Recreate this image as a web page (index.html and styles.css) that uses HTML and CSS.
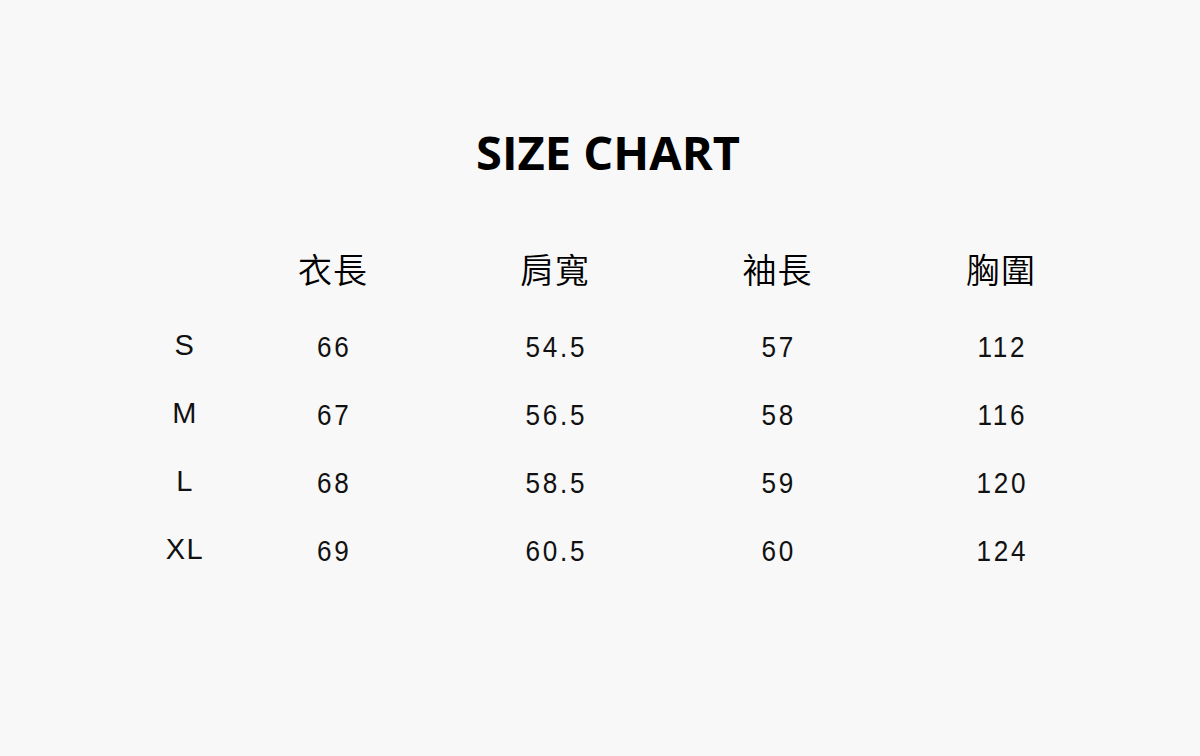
FILE: index.html
```html
<!DOCTYPE html>
<html lang="zh-Hant">
<head>
<meta charset="utf-8">
<title>Size Chart</title>
<link rel="stylesheet" href="styles.css">
</head>
<body>
<main class="page">
  <h1 class="title">SIZE CHART</h1>
  <div class="chart">
    <div class="row head">
      <div class="cell size"></div>
      <div class="cell">衣長</div>
      <div class="cell">肩寬</div>
      <div class="cell">袖長</div>
      <div class="cell">胸圍</div>
    </div>
    <div class="row">
      <div class="cell size">S</div>
      <div class="cell num">66</div>
      <div class="cell num">54.5</div>
      <div class="cell num">57</div>
      <div class="cell num">112</div>
    </div>
    <div class="row">
      <div class="cell size">M</div>
      <div class="cell num">67</div>
      <div class="cell num">56.5</div>
      <div class="cell num">58</div>
      <div class="cell num">116</div>
    </div>
    <div class="row">
      <div class="cell size">L</div>
      <div class="cell num">68</div>
      <div class="cell num">58.5</div>
      <div class="cell num">59</div>
      <div class="cell num">120</div>
    </div>
    <div class="row">
      <div class="cell size">XL</div>
      <div class="cell num">69</div>
      <div class="cell num">60.5</div>
      <div class="cell num">60</div>
      <div class="cell num">124</div>
    </div>
  </div>
</main>
</body>
</html>
```

FILE: styles.css
```css
html, body {
  margin: 0;
  padding: 0;
}
body {
  background: #f8f8f8;
  color: #000;
  width: 1200px;
  height: 756px;
  overflow: hidden;
}
.page {
  padding-top: 124px;
}
.title {
  margin: 0;
  padding-left: 16px;
  font-family: "Open Sans", "Liberation Sans", sans-serif;
  font-weight: 700;
  font-size: 47px;
  line-height: 56px;
  text-align: center;
  letter-spacing: 0;
}
.chart {
  margin-top: 47px;
  margin-left: 146px;
}
.row {
  display: grid;
  grid-template-columns: 76px 222px 222px 223px 224px;
  height: 68px;
  align-items: center;
}
.row.head {
  height: 84px;
}
.cell {
  text-align: center;
  font-family: "Noto Sans CJK TC", "Noto Sans CJK JP", sans-serif;
  font-size: 34px;
  font-weight: 350;
  line-height: 40px;
  letter-spacing: 1px;
}
.cell.num,
.cell.size {
  font-family: "Liberation Sans", Arial, sans-serif;
  font-size: 29px;
  font-weight: 400;
  color: #111;
  letter-spacing: 1.5px;
  padding-left: 2px;
}
.cell.num {
  padding-top: 3px;
  letter-spacing: 3px;
  padding-left: 3px;
  transform: scaleX(0.9);
}
```
